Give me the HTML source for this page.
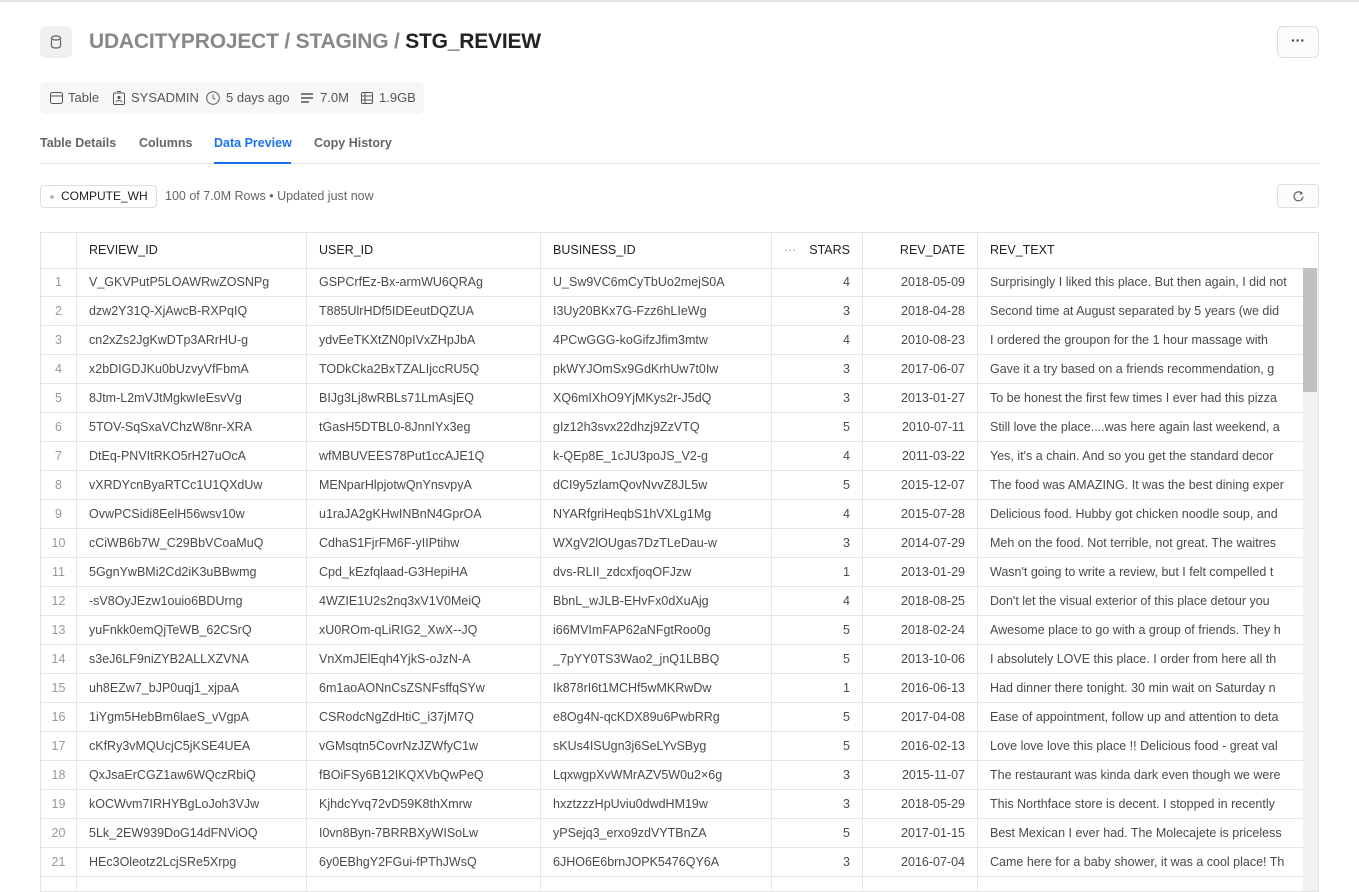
<!DOCTYPE html>
<html><head><meta charset="utf-8"><style>
*{box-sizing:border-box;margin:0;padding:0}
body{width:1359px;height:886px;overflow:hidden;background:#fff;font-family:"Liberation Sans",sans-serif;color:#333;position:relative}
.topline{position:absolute;left:0;top:0;width:1359px;height:2px;background:#e3e3e3}
.icon{position:absolute;left:40px;top:26px;width:32px;height:32px;border-radius:6px;background:#f0f0f0}
.title{position:absolute;left:89px;top:30px;font-size:21px;font-weight:bold;color:#888;letter-spacing:-0.2px}
.title b{color:#222}
.more{position:absolute;left:1277px;top:26px;width:42px;height:32px;border:1px solid #ddd;border-radius:6px;background:#fcfcfc;text-align:center;font-size:14px;line-height:26px;color:#333;font-weight:bold}
.meta{position:absolute;left:40px;top:82px;width:384px;height:32px;background:#f7f7f7;border-radius:6px;font-size:13px;color:#555;line-height:32px}
.meta span{position:absolute;top:0}
.tabs{position:absolute;left:40px;top:136px;font-size:12.5px;font-weight:bold;color:#666}
.tabs span{position:absolute;top:0;white-space:nowrap}
.tabline{position:absolute;left:40px;top:163px;width:1280px;height:1px;background:#e3e3e3}
.tabact{position:absolute;left:214px;top:162px;width:77px;height:2px;background:#1a73e8}
.wh{position:absolute;left:40px;top:185px;width:117px;height:23px;border:1px solid #ddd;border-radius:4px;font-size:12px;line-height:21px;color:#222;padding-left:20px}
.wh:before{content:"";position:absolute;left:9px;top:9px;width:4px;height:4px;border-radius:2px;background:#bbb}
.rows{position:absolute;left:165px;top:189px;font-size:12.5px;color:#666}
.refresh{position:absolute;left:1277px;top:184px;width:42px;height:24px;border:1px solid #ddd;border-radius:4px;background:#fcfcfc}
.tbl{position:absolute;left:40px;top:232px;width:1279px;height:660px;border:1px solid #e3e3e3;overflow:hidden}
.r{position:absolute;left:0;width:1279px;border-bottom:1px solid #e6e6e6;font-size:12.5px;color:#4a4a4a}
.c{position:absolute;top:0;height:100%;border-right:1px solid #e6e6e6;white-space:nowrap;overflow:hidden;padding:0 12px}
.h .c{color:#222;font-weight:normal}
.n{color:#999;text-align:center;padding:0!important}
.rt{text-align:right}
.sb{position:absolute;left:1262px;top:35px;width:16px;height:640px;background:#f1f1f1}
.th{position:absolute;left:1262px;top:35px;width:14px;height:124px;background:#c1c1c1}
</style></head><body>
<div class="topline"></div>
<div class="icon"><svg width="32" height="32" viewBox="0 0 32 32"><ellipse cx="16" cy="12" rx="4.5" ry="2" fill="none" stroke="#666" stroke-width="1.2"/><path d="M11.5 12v8c0 1.1 2 2 4.5 2s4.5-.9 4.5-2v-8" fill="none" stroke="#666" stroke-width="1.2"/></svg></div>
<div class="title">UDACITYPROJECT / STAGING / <b>STG_REVIEW</b></div>
<div class="more">···</div>
<div class="meta">
<svg style="position:absolute;left:10px;top:10px" width="13" height="12"><rect x=".5" y=".5" width="12" height="11" rx="2" fill="none" stroke="#555"/><line x1="1" y1="4" x2="12" y2="4" stroke="#555"/></svg>
<span style="left:28px">Table</span>
<svg style="position:absolute;left:73px;top:9px" width="12" height="14"><rect x=".5" y="2" width="11" height="11.5" rx="1.5" fill="none" stroke="#555"/><circle cx="6" cy="6.5" r="1.6" fill="#555"/><path d="M3 11c1-2 5-2 6 0" stroke="#555" fill="none"/><line x1="4" y1=".5" x2="8" y2=".5" stroke="#555"/></svg>
<span style="left:91px">SYSADMIN</span>
<svg style="position:absolute;left:166px;top:9px" width="14" height="14"><circle cx="7" cy="7" r="6.3" fill="none" stroke="#555"/><path d="M7 3.5V7l2.3 1.5" stroke="#555" fill="none"/></svg>
<span style="left:186px">5 days ago</span>
<svg style="position:absolute;left:261px;top:11px" width="12" height="10"><path d="M0 1h12M0 5h12M0 9h8" stroke="#555" stroke-width="1.4"/></svg>
<span style="left:280px">7.0M</span>
<svg style="position:absolute;left:321px;top:10px" width="12" height="12"><rect x=".5" y=".5" width="11" height="11" rx="1.5" fill="none" stroke="#555"/><path d="M1 4h10M1 8h10M4 1v10" stroke="#555"/></svg>
<span style="left:339px">1.9GB</span>
</div>
<div class="tabs"><span style="left:0">Table Details</span><span style="left:99px">Columns</span><span style="left:174px;color:#1a73e8">Data Preview</span><span style="left:274px">Copy History</span></div>
<div class="tabline"></div><div class="tabact"></div>
<div class="wh">COMPUTE_WH</div>
<div class="rows">100 of 7.0M Rows • Updated just now</div>
<div class="refresh"><svg style="position:absolute;left:14px;top:5px" width="13" height="13"><path d="M11 6.5A4.5 4.5 0 1 1 9.5 3" fill="none" stroke="#555" stroke-width="1.1"/><path d="M8 1.5l2 1.7-2 1.4" fill="none" stroke="#555" stroke-width="1.1"/></svg></div>
<div class="tbl">
<div class="r h" style="top:0;height:36px;line-height:35px">
<div class="c n" style="left:0;width:36px"></div>
<div class="c" style="left:36px;width:230px">REVIEW_ID</div>
<div class="c" style="left:266px;width:234px">USER_ID</div>
<div class="c" style="left:500px;width:231px">BUSINESS_ID</div>
<div class="c rt" style="left:731px;width:91px"><span style="color:#999;float:left">···</span>STARS</div>
<div class="c rt" style="left:822px;width:115px">REV_DATE</div>
<div class="c" style="left:937px;width:342px">REV_TEXT</div>
</div>
<div id="body"></div>
<div class="sb"></div><div class="th"></div>
</div>
<script>
var d=[
["V_GKVPutP5LOAWRwZOSNPg","GSPCrfEz-Bx-armWU6QRAg","U_Sw9VC6mCyTbUo2mejS0A","4","2018-05-09","Surprisingly I liked this place. But then again, I did not"],
["dzw2Y31Q-XjAwcB-RXPqIQ","T885UlrHDf5IDEeutDQZUA","I3Uy20BKx7G-Fzz6hLIeWg","3","2018-04-28","Second time at August separated by 5 years (we did"],
["cn2xZs2JgKwDTp3ARrHU-g","ydvEeTKXtZN0pIVxZHpJbA","4PCwGGG-koGifzJfim3mtw","4","2010-08-23","I ordered the groupon for the 1 hour massage with"],
["x2bDIGDJKu0bUzvyVfFbmA","TODkCka2BxTZALIjccRU5Q","pkWYJOmSx9GdKrhUw7t0Iw","3","2017-06-07","Gave it a try based on a friends recommendation, g"],
["8Jtm-L2mVJtMgkwIeEsvVg","BIJg3Lj8wRBLs71LmAsjEQ","XQ6mIXhO9YjMKys2r-J5dQ","3","2013-01-27","To be honest the first few times I ever had this pizza"],
["5TOV-SqSxaVChzW8nr-XRA","tGasH5DTBL0-8JnnIYx3eg","gIz12h3svx22dhzj9ZzVTQ","5","2010-07-11","Still love the place....was here again last weekend, a"],
["DtEq-PNVItRKO5rH27uOcA","wfMBUVEES78Put1ccAJE1Q","k-QEp8E_1cJU3poJS_V2-g","4","2011-03-22","Yes, it's a chain. And so you get the standard decor"],
["vXRDYcnByaRTCc1U1QXdUw","MENparHlpjotwQnYnsvpyA","dCI9y5zlamQovNvvZ8JL5w","5","2015-12-07","The food was AMAZING. It was the best dining exper"],
["OvwPCSidi8EelH56wsv10w","u1raJA2gKHwINBnN4GprOA","NYARfgriHeqbS1hVXLg1Mg","4","2015-07-28","Delicious food.  Hubby got chicken noodle soup, and"],
["cCiWB6b7W_C29BbVCoaMuQ","CdhaS1FjrFM6F-yIIPtihw","WXgV2lOUgas7DzTLeDau-w","3","2014-07-29","Meh on the food. Not terrible, not great. The waitres"],
["5GgnYwBMi2Cd2iK3uBBwmg","Cpd_kEzfqlaad-G3HepiHA","dvs-RLII_zdcxfjoqOFJzw","1","2013-01-29","Wasn't going to write a review, but I felt compelled t"],
["-sV8OyJEzw1ouio6BDUrng","4WZIE1U2s2nq3xV1V0MeiQ","BbnL_wJLB-EHvFx0dXuAjg","4","2018-08-25","Don't let the visual exterior of this place detour you"],
["yuFnkk0emQjTeWB_62CSrQ","xU0ROm-qLiRIG2_XwX--JQ","i66MVImFAP62aNFgtRoo0g","5","2018-02-24","Awesome place to go with a group of friends. They h"],
["s3eJ6LF9niZYB2ALLXZVNA","VnXmJElEqh4YjkS-oJzN-A","_7pYY0TS3Wao2_jnQ1LBBQ","5","2013-10-06","I absolutely LOVE this place.  I order from here all th"],
["uh8EZw7_bJP0uqj1_xjpaA","6m1aoAONnCsZSNFsffqSYw","Ik878rI6t1MCHf5wMKRwDw","1","2016-06-13","Had dinner there tonight. 30 min wait on Saturday n"],
["1iYgm5HebBm6laeS_vVgpA","CSRodcNgZdHtiC_i37jM7Q","e8Og4N-qcKDX89u6PwbRRg","5","2017-04-08","Ease of appointment, follow up and attention to deta"],
["cKfRy3vMQUcjC5jKSE4UEA","vGMsqtn5CovrNzJZWfyC1w","sKUs4ISUgn3j6SeLYvSByg","5","2016-02-13","Love love love this place !! Delicious food - great val"],
["QxJsaErCGZ1aw6WQczRbiQ","fBOiFSy6B12IKQXVbQwPeQ","LqxwgpXvWMrAZV5W0u2×6g","3","2015-11-07","The restaurant was kinda dark even though we were"],
["kOCWvm7IRHYBgLoJoh3VJw","KjhdcYvq72vD59K8thXmrw","hxztzzzHpUviu0dwdHM19w","3","2018-05-29","This Northface store is decent.  I stopped in recently"],
["5Lk_2EW939DoG14dFNViOQ","I0vn8Byn-7BRRBXyWISoLw","yPSejq3_erxo9zdVYTBnZA","5","2017-01-15","Best Mexican I ever had. The Molecajete is priceless"],
["HEc3Oleotz2LcjSRe5Xrpg","6y0EBhgY2FGui-fPThJWsQ","6JHO6E6brnJOPK5476QY6A","3","2016-07-04","Came here for a baby shower, it was a cool place! Th"],
["","","","","",""]];
var h="";
d.forEach(function(r,i){
h+='<div class="r" style="top:'+(35+29*i)+'px;height:29px;line-height:28px">'+
'<div class="c n" style="left:0;width:36px">'+(r[0]?i+1:'')+'</div>'+
'<div class="c" style="left:36px;width:230px">'+r[0]+'</div>'+
'<div class="c" style="left:266px;width:234px">'+r[1]+'</div>'+
'<div class="c" style="left:500px;width:231px">'+r[2]+'</div>'+
'<div class="c rt" style="left:731px;width:91px">'+r[3]+'</div>'+
'<div class="c rt" style="left:822px;width:115px">'+r[4]+'</div>'+
'<div class="c" style="left:937px;width:325px;border-right:none">'+r[5]+'</div></div>';});
document.getElementById("body").innerHTML=h;
</script>
</body></html>
